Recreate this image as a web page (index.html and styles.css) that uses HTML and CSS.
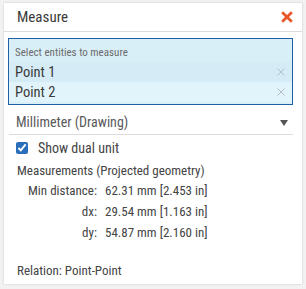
FILE: index.html
```html
<!DOCTYPE html>
<html lang="en">
<head>
    <meta charset="UTF-8">
    <title>Measure</title>
    <link rel="stylesheet" href="styles.css">
</head>
<body>
    <div class="panel">
        <div class="header">
            <span class="title">Measure</span>
            <svg class="close" width="12" height="12" viewBox="0 0 12 12">
                <path d="M1.2 1.2 L10.8 10.8 M10.8 1.2 L1.2 10.8" stroke="#e8572a" stroke-width="2.8"/>
            </svg>
        </div>
        <div class="selection">
            <div class="hint">Select entities to measure</div>
            <div class="item first">
                <span>Point 1</span>
                <svg class="remove" width="8" height="8" viewBox="0 0 8 8">
                    <path d="M0.5 0.5 L7.5 7.5 M7.5 0.5 L0.5 7.5" stroke="#b4bec4" stroke-width="1"/>
                </svg>
            </div>
            <div class="item">
                <span>Point 2</span>
                <svg class="remove" width="8" height="8" viewBox="0 0 8 8">
                    <path d="M0.5 0.5 L7.5 7.5 M7.5 0.5 L0.5 7.5" stroke="#b4bec4" stroke-width="1"/>
                </svg>
            </div>
        </div>
        <div class="units">
            <span>Millimeter (Drawing)</span>
            <span class="arrow"></span>
        </div>
        <label class="dual">
            <input type="checkbox" checked>
            <span>Show dual unit</span>
        </label>
        <div class="heading">Measurements (Projected geometry)</div>
        <div class="results">
            <span class="key">Min distance:</span><span>62.31 mm [2.453 in]</span>
            <span class="key">dx:</span><span>29.54 mm [1.163 in]</span>
            <span class="key">dy:</span><span>54.87 mm [2.160 in]</span>
        </div>
        <div class="relation">Relation: Point-Point</div>
    </div>
</body>
</html>
```

FILE: styles.css
```css
body {
    margin: 0;
    background-color: #f2f2f2;
    font-family: Roboto, "Liberation Sans", sans-serif;
    font-stretch: 82%;
    color: #444;
}

.panel {
    margin: 3px 4px;
    width: 298px;
    height: 281px;
    background-color: #fff;
    box-shadow: 0 0 2px rgba(0,0,0,0.18);
}

.header {
    display: flex;
    justify-content: space-between;
    align-items: center;
    height: 28px;
    padding: 0 9px 0 13px;
    border-bottom: 1px solid #dcdcdc;
}

.title {
    font-size: 15px;
    font-stretch: 75%;
    color: #3a3a3a;
}

.selection {
    margin: 6px 9px 0 4px;
    border: 1px solid #1f5fa6;
    background-color: #d9eff8;
    padding: 7px 0 2px;
}

.hint {
    font-size: 11px;
    line-height: 13px;
    color: #6b6b6b;
    padding: 0 6px 3px;
}

.item {
    display: flex;
    justify-content: space-between;
    align-items: center;
    height: 20px;
    padding: 0 7px 0 6px;
    font-size: 14.5px;
    font-stretch: 80%;
    color: #3a3a3a;
    background-color: #e2f4fb;
}

.item.first {
    background-color: #d5ecf6;
}

.units {
    display: flex;
    justify-content: space-between;
    align-items: center;
    margin: 0 9px 0 5px;
    padding: 9px 5px 3px 7px;
    line-height: 17px;
    font-size: 14px;
    color: #5a5a5a;
    border-bottom: 1px solid #dcdcdc;
}

.arrow {
    border-left: 4px solid transparent;
    border-right: 4px solid transparent;
    border-top: 6px solid #555;
}

.dual {
    display: flex;
    align-items: center;
    gap: 10px;
    margin: 4px 0 0 12px;
    line-height: 18px;
    font-size: 14px;
}

.dual input {
    margin: 0;
    width: 12px;
    height: 12px;
    accent-color: #2a6ebb;
}

.heading {
    margin: 5px 0 0 13px;
    line-height: 18px;
    font-size: 13px;
}

.results {
    display: grid;
    grid-template-columns: 81px auto;
    column-gap: 8px;
    margin: 0 0 0 12px;
    line-height: 21px;
    font-size: 13px;
}

.key {
    text-align: right;
}

.relation {
    margin: 19px 0 0 13px;
    line-height: 18px;
    font-size: 13px;
    font-stretch: 78%;
}
```
